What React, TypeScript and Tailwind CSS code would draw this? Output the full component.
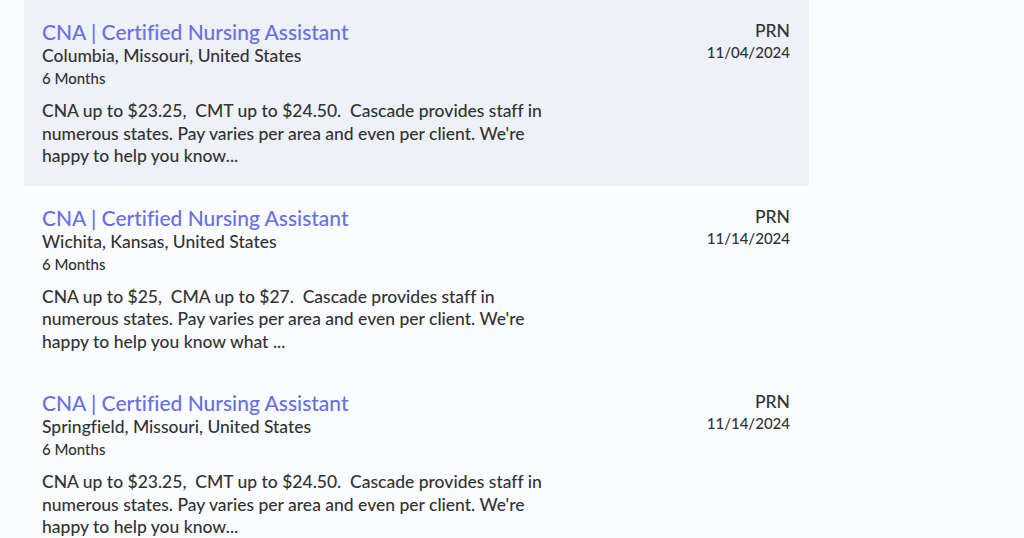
import React from 'react';

interface Job {
  title: string;
  location: string;
  duration: string;
  summary: string;
  shift: string;
  posted: string;
}

const jobs: Job[] = [
  {
    title: 'CNA | Certified Nursing Assistant',
    location: 'Columbia, Missouri, United States',
    duration: '6 Months',
    summary:
      "CNA up to $23.25,\u00a0 CMT up to $24.50.\u00a0 Cascade provides staff in numerous states. Pay varies per area and even per client. We're happy to help you know...",
    shift: 'PRN',
    posted: '11/04/2024',
  },
  {
    title: 'CNA | Certified Nursing Assistant',
    location: 'Wichita, Kansas, United States',
    duration: '6 Months',
    summary:
      "CNA up to $25,\u00a0 CMA up to $27.\u00a0 Cascade provides staff in numerous states. Pay varies per area and even per client. We're happy to help you know what ...",
    shift: 'PRN',
    posted: '11/14/2024',
  },
  {
    title: 'CNA | Certified Nursing Assistant',
    location: 'Springfield, Missouri, United States',
    duration: '6 Months',
    summary:
      "CNA up to $23.25,\u00a0 CMT up to $24.50.\u00a0 Cascade provides staff in numerous states. Pay varies per area and even per client. We're happy to help you know...",
    shift: 'PRN',
    posted: '11/14/2024',
  },
];

const JobRow: React.FC<{ job: Job; highlighted?: boolean }> = ({ job, highlighted }) => (
  <div
    className={`flex justify-between h-[185.5px] pl-[18px] pr-[19px] pt-[20px] ${
      highlighted ? 'bg-[#eef1f7]' : ''
    }`}
  >
    <div className="font-medium">
      <a href="#" className="block text-[21px] leading-[24px] text-[#6770e4]">
        {job.title}
      </a>
      <p className="text-[17.5px] leading-[23px] text-[#333333]">{job.location}</p>
      <p className="text-[15px] leading-[22px] text-[#333333]">{job.duration}</p>
      <p className="mt-[11px] w-[515px] text-[17.5px] leading-[22.5px] text-[#333333]">{job.summary}</p>
    </div>
    <div className="text-right font-medium text-[#333333]">
      <p className="text-[17.5px] leading-[22px]">{job.shift}</p>
      <p className="text-[15px] leading-[20px]">{job.posted}</p>
    </div>
  </div>
);

export default function App() {
  return (
    <div className="min-h-[538px] bg-[#fbfcff] font-['Lato',sans-serif] [font-variant-ligatures:none]">
      <div className="ml-[24px] w-[785px]">
        {jobs.map((job, i) => (
          <JobRow key={i} job={job} highlighted={i === 0} />
        ))}
      </div>
    </div>
  );
}
